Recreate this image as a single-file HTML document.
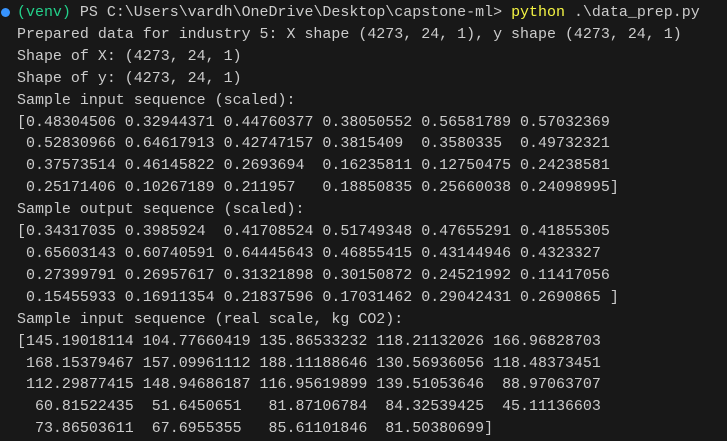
<!DOCTYPE html>
<html><head><meta charset="utf-8"><style>
html,body{margin:0;padding:0;background:#181818;width:727px;height:441px;overflow:hidden}
pre{margin:0;position:absolute;left:17px;top:3px;font-family:"Liberation Mono",monospace;font-size:14.97px;line-height:21.9px;color:#cccccc;white-space:pre}
.g{color:#23d18b}.y{color:#f5f543}
.dot{position:absolute;left:1px;top:8px;width:9px;height:9px;border-radius:50%;background:#3794ff}
</style></head><body>
<div class="dot"></div>
<pre><span class="g">(venv)</span> PS C:\Users\vardh\OneDrive\Desktop\capstone-ml&gt; <span class="y">python</span> .\data_prep.py
Prepared data for industry 5: X shape (4273, 24, 1), y shape (4273, 24, 1)
Shape of X: (4273, 24, 1)
Shape of y: (4273, 24, 1)
Sample input sequence (scaled):
[0.48304506 0.32944371 0.44760377 0.38050552 0.56581789 0.57032369
 0.52830966 0.64617913 0.42747157 0.3815409  0.3580335  0.49732321
 0.37573514 0.46145822 0.2693694  0.16235811 0.12750475 0.24238581
 0.25171406 0.10267189 0.211957   0.18850835 0.25660038 0.24098995]
Sample output sequence (scaled):
[0.34317035 0.3985924  0.41708524 0.51749348 0.47655291 0.41855305
 0.65603143 0.60740591 0.64445643 0.46855415 0.43144946 0.4323327
 0.27399791 0.26957617 0.31321898 0.30150872 0.24521992 0.11417056
 0.15455933 0.16911354 0.21837596 0.17031462 0.29042431 0.2690865 ]
Sample input sequence (real scale, kg CO2):
[145.19018114 104.77660419 135.86533232 118.21132026 166.96828703
 168.15379467 157.09961112 188.11188646 130.56936056 118.48373451
 112.29877415 148.94686187 116.95619899 139.51053646  88.97063707
  60.81522435  51.6450651   81.87106784  84.32539425  45.11136603
  73.86503611  67.6955355   85.61101846  81.50380699]</pre>
</body></html>
